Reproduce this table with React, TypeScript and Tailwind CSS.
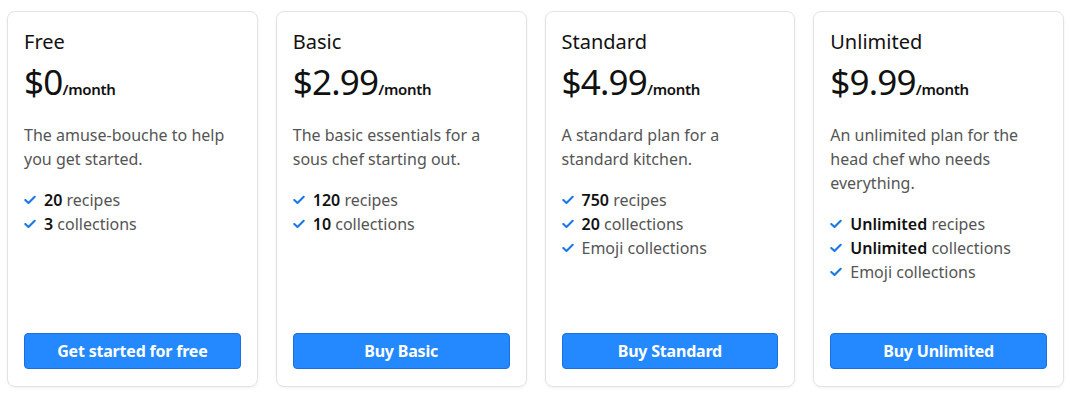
import React from 'react';

type Feature = { bold?: string; text: string };
type Plan = { name: string; price: string; desc: string; features: Feature[]; cta: string };

const PLANS: Plan[] = [
  {
    name: 'Free',
    price: '$0',
    desc: 'The amuse-bouche to help you get started.',
    features: [
      { bold: '20', text: 'recipes' },
      { bold: '3', text: 'collections' },
    ],
    cta: 'Get started for free',
  },
  {
    name: 'Basic',
    price: '$2.99',
    desc: 'The basic essentials for a sous chef starting out.',
    features: [
      { bold: '120', text: 'recipes' },
      { bold: '10', text: 'collections' },
    ],
    cta: 'Buy Basic',
  },
  {
    name: 'Standard',
    price: '$4.99',
    desc: 'A standard plan for a standard kitchen.',
    features: [
      { bold: '750', text: 'recipes' },
      { bold: '20', text: 'collections' },
      { text: 'Emoji collections' },
    ],
    cta: 'Buy Standard',
  },
  {
    name: 'Unlimited',
    price: '$9.99',
    desc: 'An unlimited plan for the head chef who needs everything.',
    features: [
      { bold: 'Unlimited', text: 'recipes' },
      { bold: 'Unlimited', text: 'collections' },
      { text: 'Emoji collections' },
    ],
    cta: 'Buy Unlimited',
  },
];

const CheckIcon = () => (
  <svg viewBox="0 0 12 10" className="w-[12px] h-[10px] shrink-0" fill="none">
    <path d="M1.3 5 L4.5 8 L10.7 1.8" stroke="#1a78e6" strokeWidth="2.1" strokeLinecap="round" strokeLinejoin="round" />
  </svg>
);

export default function App() {
  return (
    <div
      className="w-[1070px] h-[397px] bg-white pl-[7px] pr-[6px] pt-[11px] pb-[10px] grid grid-cols-4 gap-[18px]"
      style={{ fontFamily: '"Noto Sans", "Open Sans", sans-serif' }}
    >
      {PLANS.map((plan) => (
        <div
          key={plan.name}
          className="flex flex-col rounded-[8px] border border-[#e3e3e3] shadow-[0_1px_3px_rgba(0,0,0,0.06)] px-[16px] pt-[16px] pb-[17px]"
        >
          <h3 className="text-[20px] leading-[28px] font-normal text-[#111]">{plan.name}</h3>
          <div className="mt-[6px] flex items-baseline text-[#111]">
            <span className="text-[35px] leading-[40px] font-normal tracking-[-0.8px]">{plan.price}</span>
            <span className="text-[15px] font-semibold tracking-[-0.3px]">/month</span>
          </div>
          <p className="mt-[21px] text-[16px] leading-[24px] text-[#555]">{plan.desc}</p>
          <ul className="mt-[17px] flex flex-col">
            {plan.features.map((f, i) => (
              <li key={i} className="flex items-center gap-[8px] text-[16px] leading-[24px] text-[#555]">
                <CheckIcon />
                <span>
                  {f.bold && <span className="font-semibold text-[#111]">{f.bold} </span>}
                  {f.text}
                </span>
              </li>
            ))}
          </ul>
          <button className="mt-auto h-[36px] w-full rounded-[4px] bg-[#2489ff] border border-[#1c6fdc] text-white text-[16px] font-bold tracking-[-0.2px]">
            {plan.cta}
          </button>
        </div>
      ))}
    </div>
  );
}
